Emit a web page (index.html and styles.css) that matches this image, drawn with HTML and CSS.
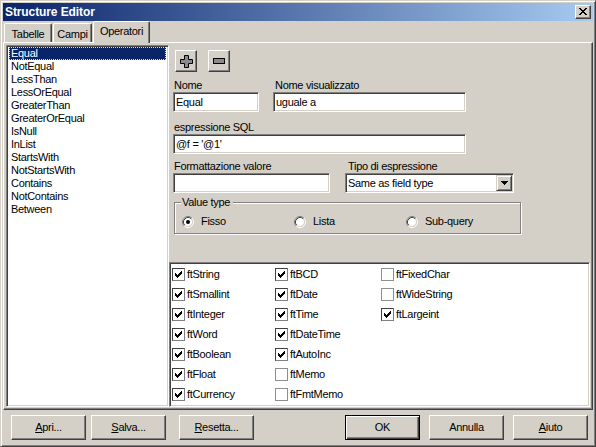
FILE: index.html
```html
<!DOCTYPE html>
<html>
<head>
<meta charset="utf-8">
<title>Structure Editor</title>
<link rel="stylesheet" href="styles.css">
</head>
<body>
<div class="window">
  <div class="titlebar">
    <span class="title">Structure Editor</span>
    <span class="close"><svg width="8" height="7" viewBox="0 0 8 7"><path d="M0 0h2v1H0zM1 1h2v1H1zM2 2h2v1H2zM3 3h2v1H3zM4 4h2v1H4zM5 5h2v1H5zM6 6h2v1H6zM6 0h2v1H6zM5 1h2v1H5zM4 2h2v1H4zM2 4h2v1H2zM1 5h2v1H1zM0 6h2v1H0z" fill="#000"/></svg></span>
  </div>
  <div class="tabs">
    <div class="tab t1">Tabelle</div>
    <div class="tab t2">Campi</div>
    <div class="tab t3 active">Operatori</div>
  </div>
  <div class="page">
    <div class="list">
      <div class="item sel">Equal</div>
      <div class="item">NotEqual</div>
      <div class="item">LessThan</div>
      <div class="item">LessOrEqual</div>
      <div class="item">GreaterThan</div>
      <div class="item">GreaterOrEqual</div>
      <div class="item">IsNull</div>
      <div class="item">InList</div>
      <div class="item">StartsWith</div>
      <div class="item">NotStartsWith</div>
      <div class="item">Contains</div>
      <div class="item">NotContains</div>
      <div class="item">Between</div>
    </div>
    <div class="right">
      <div class="form">
        <div class="toolbar">
          <div class="btn sq"><svg width="13" height="13" viewBox="0 0 13 13"><polygon points="4.5,0.5 8.5,0.5 8.5,4.5 12.5,4.5 12.5,8.5 8.5,8.5 8.5,12.5 4.5,12.5 4.5,8.5 0.5,8.5 0.5,4.5 4.5,4.5" fill="#8a8a8a" stroke="#000" stroke-width="1"/></svg></div>
          <div class="btn sq sq2"><svg width="12" height="6" viewBox="0 0 12 6"><rect x="0.5" y="0.5" width="11" height="5" fill="#8a8a8a" stroke="#000" stroke-width="1"/></svg></div>
        </div>
        <div class="row r-names">
          <div class="field f-nome"><div class="lbl">Nome</div><div class="input">Equal</div></div>
          <div class="field f-vis"><div class="lbl lbl2">Nome visualizzato</div><div class="input">uguale a</div></div>
        </div>
        <div class="field f-sql"><div class="lbl">espressione SQL</div><div class="input">@f = '@1'</div></div>
        <div class="row r-fmt">
          <div class="field f-fmt"><div class="lbl">Formattazione valore</div><div class="input"></div></div>
          <div class="field f-tipo"><div class="lbl lbl3">Tipo di espressione</div>
            <div class="combo"><span class="combo-text">Same as field type</span>
              <span class="drop"><svg width="7" height="4" viewBox="0 0 7 4"><path d="M0 0h7v1H0zM1 1h5v1H1zM2 2h3v1H2zM3 3h1v1H3z" fill="#000"/></svg></span>
            </div>
          </div>
        </div>
        <fieldset class="group">
          <legend>Value type</legend>
          <div class="radios">
            <div class="ri"><svg class="radio" width="12" height="12" viewBox="0 0 12 12"><circle cx="6" cy="6" r="4.5" fill="#fff"/><path d="M2.11 9.89A5.5 5.5 0 0 1 9.89 2.11" fill="none" stroke="#808080"/><path d="M9.89 2.11A5.5 5.5 0 0 1 2.11 9.89" fill="none" stroke="#fff"/><path d="M2.82 9.18A4.5 4.5 0 0 1 9.18 2.82" fill="none" stroke="#404040"/><path d="M9.18 2.82A4.5 4.5 0 0 1 2.82 9.18" fill="none" stroke="#d4d0c8"/><circle cx="6" cy="6" r="2" fill="#000"/></svg><span>Fisso</span></div>
            <div class="ri"><svg class="radio" width="12" height="12" viewBox="0 0 12 12"><circle cx="6" cy="6" r="4.5" fill="#fff"/><path d="M2.11 9.89A5.5 5.5 0 0 1 9.89 2.11" fill="none" stroke="#808080"/><path d="M9.89 2.11A5.5 5.5 0 0 1 2.11 9.89" fill="none" stroke="#fff"/><path d="M2.82 9.18A4.5 4.5 0 0 1 9.18 2.82" fill="none" stroke="#404040"/><path d="M9.18 2.82A4.5 4.5 0 0 1 2.82 9.18" fill="none" stroke="#d4d0c8"/></svg><span>Lista</span></div>
            <div class="ri"><svg class="radio" width="12" height="12" viewBox="0 0 12 12"><circle cx="6" cy="6" r="4.5" fill="#fff"/><path d="M2.11 9.89A5.5 5.5 0 0 1 9.89 2.11" fill="none" stroke="#808080"/><path d="M9.89 2.11A5.5 5.5 0 0 1 2.11 9.89" fill="none" stroke="#fff"/><path d="M2.82 9.18A4.5 4.5 0 0 1 9.18 2.82" fill="none" stroke="#404040"/><path d="M9.18 2.82A4.5 4.5 0 0 1 2.82 9.18" fill="none" stroke="#d4d0c8"/></svg><span>Sub-query</span></div>
          </div>
        </fieldset>
      </div>
      <div class="checklist">
        <div class="ci"><span class="cb on"><svg width="11" height="11" viewBox="0 0 11 11"><path d="M2 4h1v3H2zM3 5h1v3H3zM4 6h1v3H4zM5 5h1v3H5zM6 4h1v3H6zM7 3h1v3H7zM8 2h1v3H8z" fill="#000"/></svg></span><span>ftString</span></div>
        <div class="ci"><span class="cb on"><svg width="11" height="11" viewBox="0 0 11 11"><path d="M2 4h1v3H2zM3 5h1v3H3zM4 6h1v3H4zM5 5h1v3H5zM6 4h1v3H6zM7 3h1v3H7zM8 2h1v3H8z" fill="#000"/></svg></span><span>ftSmallint</span></div>
        <div class="ci"><span class="cb on"><svg width="11" height="11" viewBox="0 0 11 11"><path d="M2 4h1v3H2zM3 5h1v3H3zM4 6h1v3H4zM5 5h1v3H5zM6 4h1v3H6zM7 3h1v3H7zM8 2h1v3H8z" fill="#000"/></svg></span><span>ftInteger</span></div>
        <div class="ci"><span class="cb on"><svg width="11" height="11" viewBox="0 0 11 11"><path d="M2 4h1v3H2zM3 5h1v3H3zM4 6h1v3H4zM5 5h1v3H5zM6 4h1v3H6zM7 3h1v3H7zM8 2h1v3H8z" fill="#000"/></svg></span><span>ftWord</span></div>
        <div class="ci"><span class="cb on"><svg width="11" height="11" viewBox="0 0 11 11"><path d="M2 4h1v3H2zM3 5h1v3H3zM4 6h1v3H4zM5 5h1v3H5zM6 4h1v3H6zM7 3h1v3H7zM8 2h1v3H8z" fill="#000"/></svg></span><span>ftBoolean</span></div>
        <div class="ci"><span class="cb on"><svg width="11" height="11" viewBox="0 0 11 11"><path d="M2 4h1v3H2zM3 5h1v3H3zM4 6h1v3H4zM5 5h1v3H5zM6 4h1v3H6zM7 3h1v3H7zM8 2h1v3H8z" fill="#000"/></svg></span><span>ftFloat</span></div>
        <div class="ci"><span class="cb on"><svg width="11" height="11" viewBox="0 0 11 11"><path d="M2 4h1v3H2zM3 5h1v3H3zM4 6h1v3H4zM5 5h1v3H5zM6 4h1v3H6zM7 3h1v3H7zM8 2h1v3H8z" fill="#000"/></svg></span><span>ftCurrency</span></div>
        <div class="ci"><span class="cb on"><svg width="11" height="11" viewBox="0 0 11 11"><path d="M2 4h1v3H2zM3 5h1v3H3zM4 6h1v3H4zM5 5h1v3H5zM6 4h1v3H6zM7 3h1v3H7zM8 2h1v3H8z" fill="#000"/></svg></span><span>ftBCD</span></div>
        <div class="ci"><span class="cb on"><svg width="11" height="11" viewBox="0 0 11 11"><path d="M2 4h1v3H2zM3 5h1v3H3zM4 6h1v3H4zM5 5h1v3H5zM6 4h1v3H6zM7 3h1v3H7zM8 2h1v3H8z" fill="#000"/></svg></span><span>ftDate</span></div>
        <div class="ci"><span class="cb on"><svg width="11" height="11" viewBox="0 0 11 11"><path d="M2 4h1v3H2zM3 5h1v3H3zM4 6h1v3H4zM5 5h1v3H5zM6 4h1v3H6zM7 3h1v3H7zM8 2h1v3H8z" fill="#000"/></svg></span><span>ftTime</span></div>
        <div class="ci"><span class="cb on"><svg width="11" height="11" viewBox="0 0 11 11"><path d="M2 4h1v3H2zM3 5h1v3H3zM4 6h1v3H4zM5 5h1v3H5zM6 4h1v3H6zM7 3h1v3H7zM8 2h1v3H8z" fill="#000"/></svg></span><span>ftDateTime</span></div>
        <div class="ci"><span class="cb on"><svg width="11" height="11" viewBox="0 0 11 11"><path d="M2 4h1v3H2zM3 5h1v3H3zM4 6h1v3H4zM5 5h1v3H5zM6 4h1v3H6zM7 3h1v3H7zM8 2h1v3H8z" fill="#000"/></svg></span><span>ftAutoInc</span></div>
        <div class="ci"><span class="cb"></span><span>ftMemo</span></div>
        <div class="ci"><span class="cb"></span><span>ftFmtMemo</span></div>
        <div class="ci"><span class="cb"></span><span>ftFixedChar</span></div>
        <div class="ci"><span class="cb"></span><span>ftWideString</span></div>
        <div class="ci"><span class="cb on"><svg width="11" height="11" viewBox="0 0 11 11"><path d="M2 4h1v3H2zM3 5h1v3H3zM4 6h1v3H4zM5 5h1v3H5zM6 4h1v3H6zM7 3h1v3H7zM8 2h1v3H8z" fill="#000"/></svg></span><span>ftLargeint</span></div>
      </div>
    </div>
  </div>
  <div class="footer">
    <div class="btn wide"><span><u>A</u>pri...</span></div>
    <div class="btn wide b-salva"><span><u>S</u>alva...</span></div>
    <div class="btn wide b-reset"><span><u>R</u>esetta...</span></div>
    <div class="btn wide default b-ok"><span>OK</span></div>
    <div class="btn wide b-next"><span>Annulla</span></div>
    <div class="btn wide b-next"><span><u>A</u>iuto</span></div>
  </div>
</div>
</body>
</html>
```

FILE: styles.css
```css
* { box-sizing: border-box; }
html, body { margin: 0; padding: 0; }
body {
  width: 596px;
  height: 447px;
  overflow: hidden;
  background: #d4d0c8;
  color: #000;
  font-family: "Liberation Sans", Arial, sans-serif;
  font-size: 11px;
  line-height: 13px;
  letter-spacing: -0.3px;
}
.window {
  width: 596px;
  height: 447px;
  background: #d4d0c8;
  border: 1px solid;
  border-color: #d4d0c8 #404040 #404040 #d4d0c8;
  box-shadow: inset 1px 1px #fff, inset -1px -1px #808080;
  padding: 2px;
  display: flex;
  flex-direction: column;
}
.titlebar {
  flex: none;
  height: 18px;
  background: linear-gradient(to right, #0a246a, #a6caf0);
  display: flex;
  align-items: center;
  justify-content: space-between;
  padding: 0 2px 0 2px;
}
.title {
  color: #fff;
  font-weight: bold;
  font-size: 12px;
  letter-spacing: -0.1px;
}
.close {
  width: 16px;
  height: 14px;
  background: #d4d0c8;
  border: 1px solid;
  border-color: #fff #404040 #404040 #fff;
  box-shadow: inset -1px -1px #808080;
  display: flex;
  align-items: center;
  justify-content: center;
  padding: 0 1px 1px 0;
}
.close svg { display: block; }

/* tabs */
.tabs {
  flex: none;
  height: 21px;
  display: flex;
  align-items: flex-end;
  padding-left: 1px;
}
.tab {
  height: 19px;
  margin-left: 1px;
  padding-top: 4px;
  text-align: center;
  background: #d4d0c8;
  border: 1px solid;
  border-bottom: none;
  border-color: #fff #404040 #404040 #fff;
  border-radius: 2px 2px 0 0;
  box-shadow: inset -1px 0 #808080;
}
.t1 { width: 48px; margin-left: 0; }
.t2 { width: 39px; }
.t3 { width: 57px; }
.tab.active {
  height: 22px;
  padding-top: 3px;
  margin-bottom: -1px;
  position: relative;
  z-index: 1;
}

/* page */
.page {
  flex: none;
  height: 368px;
  border: 1px solid;
  border-color: #fff #404040 #404040 #fff;
  box-shadow: inset -1px -1px #808080;
  padding: 2px;
  display: flex;
}
.list {
  flex: none;
  width: 163px;
  background: #fff;
  border: 1px solid;
  border-color: #808080 #fff #fff #808080;
  box-shadow: inset 1px 1px #404040, inset -1px -1px #d4d0c8;
  padding: 1px 2px 0 2px;
  overflow: hidden;
}
.item {
  height: 13px;
  padding-left: 2px;
  white-space: nowrap;
}
.item.sel {
  background: #0a246a;
  color: #fff;
  outline: 1px dotted #f5db95;
  outline-offset: -1px;
}
.right {
  flex: 1;
  display: flex;
  flex-direction: column;
}
.form {
  flex: none;
  height: 217px;
  padding: 5px 0 0 4px;
}
.toolbar {
  display: flex;
  margin-left: 2px;
}
.btn {
  background: #d4d0c8;
  border: 1px solid;
  border-color: #fff #404040 #404040 #fff;
  box-shadow: inset -1px -1px #808080;
  display: flex;
  align-items: center;
  justify-content: center;
}
.btn svg { display: block; }
.sq { width: 22px; height: 22px; }
.sq2 { margin-left: 11px; }
.row { display: flex; }
.field { display: flex; flex-direction: column; }
.lbl { height: 13px; padding-left: 1px; white-space: nowrap; }
.lbl2 { padding-left: 2px; }
.lbl3 { padding-left: 3px; }
.input, .combo {
  height: 20px;
  background: #fff;
  border: 1px solid;
  border-color: #808080 #fff #fff #808080;
  box-shadow: inset 1px 1px #404040, inset -1px -1px #d4d0c8;
  display: flex;
  align-items: center;
  padding-left: 2px;
  white-space: nowrap;
}
.r-names { margin-top: 7px; }
.f-nome { width: 86px; }
.f-vis { width: 193px; margin-left: 14px; }
.f-sql { width: 293px; margin-top: 9px; }
.r-fmt { margin-top: 6px; }
.f-fmt { width: 157px; }
.f-tipo { width: 169px; margin-left: 15px; }
.combo { padding: 1px 1px 1px 2px; justify-content: space-between; }
.combo-text { flex: 1; }
.drop {
  width: 16px;
  height: 16px;
  background: #d4d0c8;
  border: 1px solid;
  border-color: #d4d0c8 #404040 #404040 #d4d0c8;
  box-shadow: inset 1px 1px #fff, inset -1px -1px #808080;
  display: flex;
  align-items: center;
  justify-content: center;
}
.group {
  margin: 3px 0 0 1px;
  width: 347px;
  min-width: 0;
  padding: 6px 6px 5px 6px;
  border: 1px solid #808080;
  box-shadow: inset 1px 1px #fff, 1px 1px #fff;
}
.group legend {
  padding: 0 3px 0 1px;
  background: #d4d0c8;
  line-height: 13px;
}
.radios {
  display: grid;
  grid-template-columns: 112px 112px auto;
  height: 13px;
  margin-left: 1px;
}
.ri { display: flex; align-items: center; gap: 7px; }
.radio { display: block; flex: none; }

/* check list */
.checklist {
  flex: 1;
  background: #fff;
  border: 1px solid;
  border-color: #808080 #fff #fff #808080;
  box-shadow: inset 1px 1px #404040, inset -1px -1px #d4d0c8;
  padding: 1px 0 0 2px;
  display: grid;
  grid-template-columns: 103px 106px 1fr;
  grid-template-rows: repeat(7, 20px);
  grid-auto-flow: column;
  align-content: start;
}
.ci { display: flex; align-items: center; gap: 2px; white-space: nowrap; }
.cb {
  flex: none;
  width: 13px;
  height: 13px;
  border: 1px solid #8e8e8e;
  background: #fff;
}
.cb.on {
  border-color: #404040 #808080 #808080 #404040;
}
.cb svg { display: block; }

/* footer */
.footer {
  flex: none;
  height: 34px;
  display: flex;
  align-items: flex-start;
  padding: 5px 5px 0 8px;
}
.wide { width: 75px; height: 25px; }
.b-salva { margin-left: 5px; }
.b-reset { margin-left: 13px; }
.b-ok { margin-left: auto; }
.b-next { margin-left: 9px; }
.btn.default {
  border-color: #000;
  box-shadow: inset 1px 1px #fff, inset -1px -1px #404040, inset -2px -2px #808080;
}
u { text-decoration: underline; text-underline-offset: 1px; }
```
